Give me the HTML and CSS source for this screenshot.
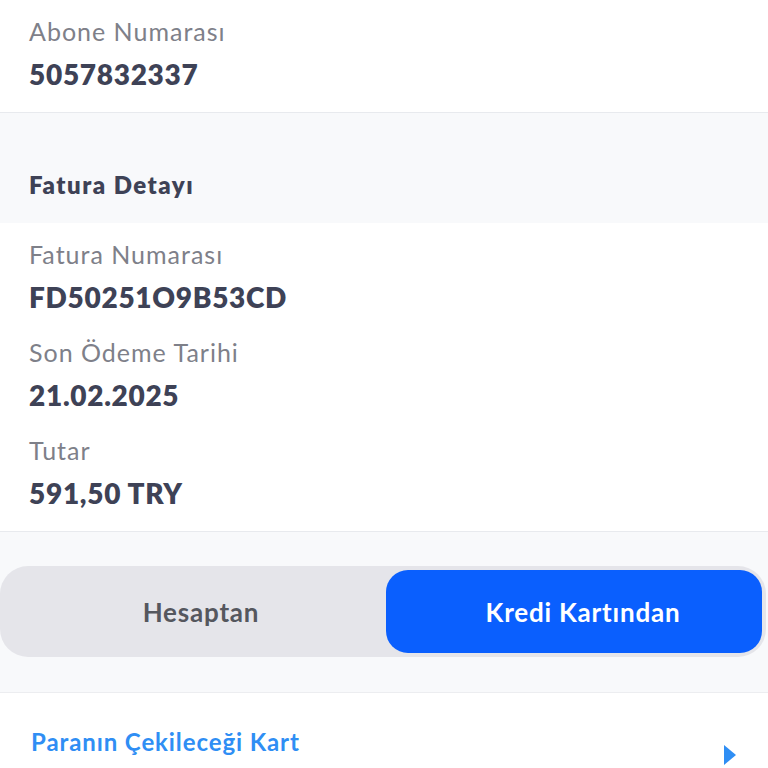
FILE: index.html
```
<!DOCTYPE html>
<html lang="tr">
<head>
<meta charset="utf-8">
<link rel="stylesheet" href="styles.css">
</head>
<body>
<div class="page">
  <section class="block">
    <div class="field">
      <div class="label">Abone Numarası</div>
      <div class="value">5057832337</div>
    </div>
  </section>
  <header class="section-head">
    <h2 class="section-title">Fatura Detayı</h2>
  </header>
  <section class="block">
    <div class="field">
      <div class="label">Fatura Numarası</div>
      <div class="value">FD50251O9B53CD</div>
    </div>
    <div class="field">
      <div class="label">Son Ödeme Tarihi</div>
      <div class="value">21.02.2025</div>
    </div>
    <div class="field">
      <div class="label">Tutar</div>
      <div class="value">591,50 TRY</div>
    </div>
  </section>
  <div class="toggle-area">
    <div class="segmented">
      <div class="seg">Hesaptan</div>
      <div class="seg active">Kredi Kartından</div>
    </div>
  </div>
  <section class="card-row">
    <div class="card-title">Paranın Çekileceği Kart</div>
    <svg class="arrow" width="14" height="22" viewBox="0 0 14 22"><path d="M1 1 L13 11 L1 21 Z" fill="#2f8ef4"/></svg>
  </section>
</div>
</body>
</html>
```
FILE: styles.css
```
* { box-sizing: border-box; }
html, body { margin: 0; padding: 0; }
body {
  background: #ffffff;
  font-family: "Lato", "Noto Sans", sans-serif;
  width: 768px;
  height: 768px;
  overflow: hidden;
}
.page { display: flex; flex-direction: column; }
.block {
  background: #ffffff;
  padding: 13px 29px 13px;
  display: flex;
  flex-direction: column;
  gap: 12px;
  border-bottom: 1px solid #e8eaee;
}
.field { display: flex; flex-direction: column; }
.label {
  font-size: 25px;
  line-height: 36px;
  color: #7e8089;
  font-weight: 400;
  letter-spacing: 1px;
}
.value {
  font-size: 28px;
  line-height: 50px;
  color: #3e4256;
  font-weight: 800;
  letter-spacing: 0.7px;
}
.section-head {
  background: #f8f9fb;
  padding: 57px 29px 23px;
}
.section-title {
  margin: 0;
  font-size: 24px;
  line-height: 30px;
  font-weight: 800;
  color: #3e4256;
  letter-spacing: 1.5px;
}
.toggle-area {
  background: #f8f9fb;
  padding: 34px 2px 35px 0;
  border-bottom: 1px solid #ecedf0;
}
.segmented {
  background: #e5e5ea;
  border-radius: 28px;
  padding: 4px;
  display: grid;
  grid-template-columns: 1fr 1fr;
  gap: 6px;
  height: 91px;
}
.seg {
  display: flex;
  align-items: center;
  justify-content: center;
  border-radius: 22px;
  font-size: 26px;
  font-weight: 700;
  color: #55575e;
  letter-spacing: 0.8px;
  padding-left: 18px;
}
.seg.active {
  background: #0a5ffe;
  color: #ffffff;
}
.card-row {
  background: #ffffff;
  padding: 34px 31px 0 31px;
  display: flex;
  justify-content: space-between;
  align-items: flex-start;
}
.card-title {
  font-size: 24px;
  line-height: 30px;
  font-weight: 700;
  color: #2f8ef4;
  letter-spacing: 0.9px;
}
.arrow { margin-top: 17px; margin-right: 0; }
```
